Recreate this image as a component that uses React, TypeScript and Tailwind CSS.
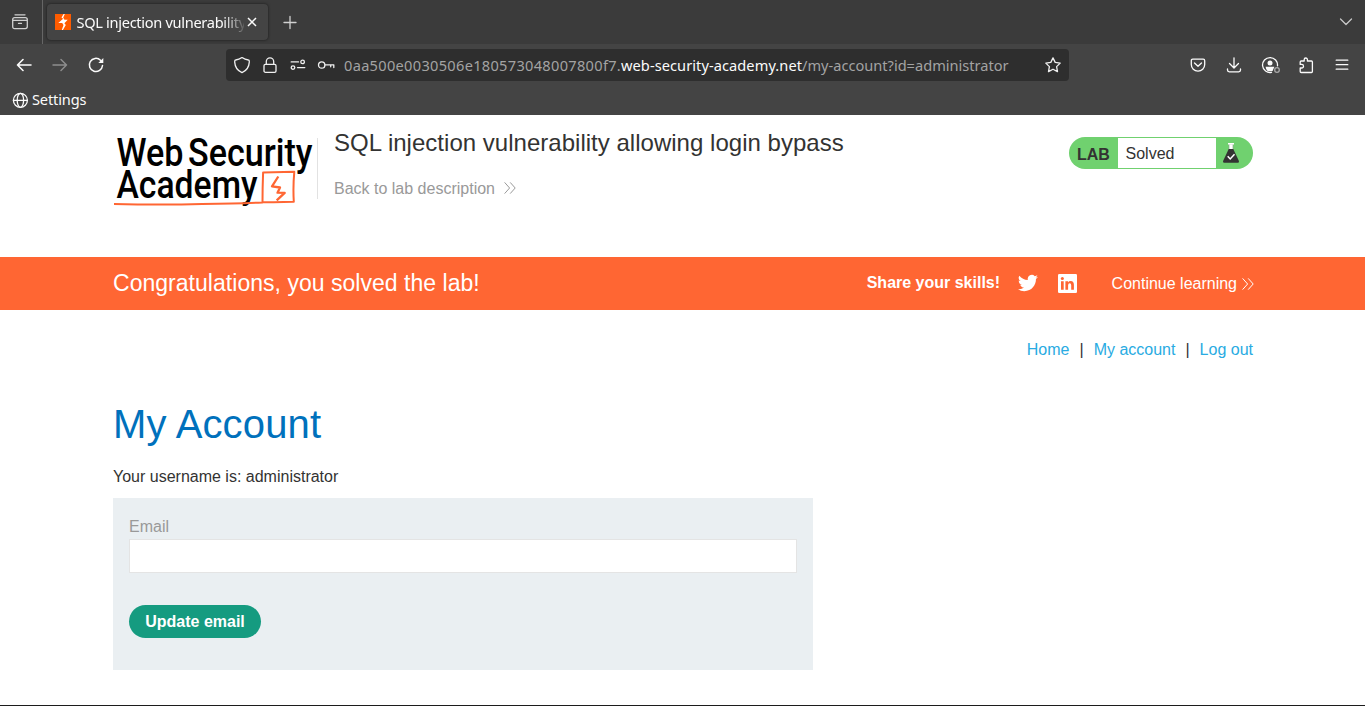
import type { ReactNode } from "react";

type IconProps = { children: ReactNode; className?: string };

function Icon({ children, className = "" }: IconProps) {
  return (
    <svg
      viewBox="0 0 16 16"
      className={`size-4 shrink-0 overflow-visible ${className}`}
      fill="none"
      stroke="currentColor"
      strokeWidth="1.3"
      strokeLinecap="round"
      strokeLinejoin="round"
      aria-hidden="true"
    >
      {children}
    </svg>
  );
}

function TabBar() {
  return (
    <div className="flex h-11 bg-[#3b3b3b]">
      <div className="flex w-[43px] items-center border-r border-[#666] pl-3 text-[#d0d0d0]">
        <Icon>
          <path d="M3 .8h10" />
          <path d="M2.7 3.6h10.6q2 0 2 2v7q0 2-2 2H2.7q-2 0-2-2v-7q0-2 2-2zM.8 6.300h14.4M6.500 9.400h3" />
        </Icon>
      </div>
      <div className="ml-1 mt-1 flex h-9 w-[221px] items-center rounded bg-[#444] pl-2 shadow-[0_0_3px_rgba(0,0,0,0.6)]">
        <svg viewBox="0 0 16 16" className="size-4 shrink-0" aria-hidden="true">
          <rect width="16" height="16" fill="#ff5c00" />
          <path d="M8.600 0 6.500 3.400l1.600 1.400-4.800 4.300h3.900L8.500 11 6.800 16h1.100l2.900-5-1.400-1.800 3.300-3.500H9.500L8.200 3.700 9.800 0z" fill="#fff" />
        </svg>
        <span className="ml-[5.5px] w-[167.5px] whitespace-nowrap text-[14.6px] leading-5 tracking-[-0.31px] text-[#fbfbfb] [mask-image:linear-gradient(to_right,#000_146px,transparent_170px)]">
          SQL injection vulnerability
        </span>
        <svg viewBox="0 0 8 8" className="ml-1 size-2 shrink-0 overflow-visible" stroke="#fbfbfb" strokeWidth="1.5" aria-hidden="true">
          <path d="m0 0 8 8M8 0 0 8" />
        </svg>
      </div>
      <div className="ml-[14px] flex items-center text-[#d0d0d0]">
        <Icon><path d="M8 2.5v12M2 8.5h12" /></Icon>
      </div>
      <div className="ml-auto mr-[11px] flex items-center text-[#c8c8c8]">
        <Icon><path d="m2.5 5 5.5 5.5L13.5 5" /></Icon>
      </div>
    </div>
  );
}

function AddressBar() {
  return (
    <div className="ml-[122px] flex h-8 w-[843px] items-center rounded bg-[#2e2e2e] pl-2 text-[#f0f0f0]">
      <Icon><path d="M8 .6q3 2.2 6.4 2.4 1 0 .9 2.1C15 10 12.5 13.7 8 15.6 3.5 13.7 1 10 .7 5.1q0-2.1.9-2.1Q5 2.800 8 .6z" /></Icon>
      <Icon className="ml-3">
        <rect x="2" y="7.300" width="12" height="8" rx="1.400" />
        <path d="M4.300 7.300V4.500a3.700 3.700 0 0 1 7.400 0v2.800" />
      </Icon>
      <Icon className="ml-3">
        <path d="M1.200 4.900h7.300M7.500 10.600h7.300" />
        <circle cx="12.600" cy="4.900" r="1.800" />
        <circle cx="3" cy="10.600" r="1.800" />
      </Icon>
      <Icon className="ml-3">
        <circle cx="3.700" cy="8" r="3.200" />
        <path d="M6.900 7.800h8.900v2.700M12.700 7.800v2" />
      </Icon>
      <div className="ml-[10px] flex w-[701px] whitespace-nowrap text-[14.6px] leading-6 text-[#a3a3a3]">
        <span className="w-[277px] tracking-[0.3px]">0aa500e0030506e180573048007800f7.</span>
        <span className="w-[181px] tracking-[0.07px] text-[#fbfbfb]">web-security-academy.net</span>
        <span>/my-account?id=administrator</span>
      </div>
      <Icon><path d="m8 .9 2.200 4.500 5 .7-3.600 3.500.9 5L8 12.200l-4.500 2.400.9-5L.8 6.100l5-.7z" /></Icon>
    </div>
  );
}

function NavBar() {
  return (
    <div className="flex h-[42px] items-center pl-4 text-[#fbfbfb]">
      <Icon><path strokeWidth="1.600" d="M15 8H1.500M7 2.500 1.500 8 7 13.500" /></Icon>
      <Icon className="ml-5 text-[#8d8d8d]"><path strokeWidth="1.500" d="M1 8h13.500M9 2.500 14.500 8 9 13.500" /></Icon>
      <Icon className="ml-5">
        <path strokeWidth="1.500" d="M14.500 8.500A6.600 6.600 0 1 1 12.500 3.200" />
        <path d="M15.300 1v5H10.300z" fill="currentColor" stroke="none" />
      </Icon>
      <AddressBar />
      <div className="ml-[121px] flex items-center gap-5">
        <Icon>
          <path d="M2.800 2.200h10.400q1.500 0 1.500 1.500v3.800a6.700 6.700 0 0 1-13.400 0V3.700q0-1.500 1.500-1.500z" />
          <path d="M4.500 6 8 9.300 11.500 6" />
        </Icon>
        <Icon>
          <path d="M8 .8v10M3.500 6.500 8 11l4.500-4.500M1.500 12v1q0 1.800 1.800 1.800h9.400q1.800 0 1.800-1.800v-1" />
        </Icon>
        <Icon>
          <path d="M9.500 15.400A7.500 7.500 0 1 1 15.500 8.800" />
          <circle cx="8" cy="6" r="2.500" fill="currentColor" stroke="none" />
          <path d="M3.600 9.700h8.800l-1 2.300-.8 1.900q-2.600.8-5 0-2-1.700-2-4.200z" fill="currentColor" stroke="none" />
          <circle cx="15" cy="13" r="2.300" stroke="#aaa" />
        </Icon>
        <Icon>
          <path d="M2.200 5q0-1 1-1h3V2.600a1.600 1.600 0 0 1 3.200 0V4h4q1 0 1 1v9.500q0 1-1 1H3.200q-1 0-1-1V11h1.500a1.800 1.800 0 0 0 0-3.600H2.200z" />
        </Icon>
        <Icon><path d="M2.200 3.200h11.600M2.200 7.700h11.600M2.200 12.200h11.600" /></Icon>
      </div>
    </div>
  );
}

function Bookmarks() {
  return (
    <div className="flex h-7 items-center pl-3 text-[#fbfbfb]">
      <Icon>
        <circle cx="8.400" cy="8.300" r="7" />
        <ellipse cx="8.400" cy="8.300" rx="3.200" ry="7" />
        <path d="M1.400 8.300h14" />
      </Icon>
      <span className="-mt-0.5 ml-1 text-[14.6px] leading-5 tracking-[-0.15px]">Settings</span>
    </div>
  );
}

function AcademyLogo() {
  return (
    <svg viewBox="0 0 200 74" className="h-[74px] w-[200px] shrink-0 overflow-visible" role="img" aria-label="Web Security Academy">
      <g fill="#000" fontFamily="Roboto, sans-serif" fontWeight="500" fontSize="38">
        <text x="3.500" y="30.800" textLength="67" lengthAdjust="spacingAndGlyphs">Web</text>
        <text x="75" y="30.800" textLength="124.500" lengthAdjust="spacingAndGlyphs">Security</text>
        <text x="3.500" y="63.300" textLength="141" lengthAdjust="spacingAndGlyphs">Academy</text>
      </g>
      <g fill="none" stroke="#ff6633" strokeLinejoin="round">
        <path strokeWidth="2" d="M1 69q48 1.200 88 0 38-.5 60.500-1.500 0-14.500.6-29.900l31.200-.8q-1.400 15-.5 30-15 .6-30.500.300" />
        <path strokeWidth="2.300" d="m165.300 41.500-6.300 9.800 8 1.200-2.500 5.200 7.200.2-8 7.500" />
      </g>
    </svg>
  );
}

function Chevrons({ className = "" }: { className?: string }) {
  return (
    <svg viewBox="0 0 12 12" className={`size-3 shrink-0 ${className}`} fill="none" stroke="currentColor" strokeWidth="1" aria-hidden="true">
      <path d="m.6.4 5 5.600-5 5.600M6.200.4l5 5.600-5 5.600" />
    </svg>
  );
}

function LabHeader() {
  return (
    <header className="flex h-[142px] items-start pl-[113px] pr-28 pt-5">
      <AcademyLogo />
      <div className="ml-1 mt-[3px] h-[61px] w-px bg-[#e2e2e2]" />
      <div className="ml-4">
        <h1 className="-mt-2 text-2xl leading-8 tracking-[0.02px] text-[#333332]">SQL injection vulnerability allowing login bypass</h1>
        <a href="#" className="mt-[17px] flex h-6 items-center pt-px text-base text-[#999]">
          Back to lab description
          <Chevrons className="-mt-px ml-[9px]" />
        </a>
      </div>
      <div className="ml-auto mt-0.5 flex h-8 w-[184px] rounded-full bg-[#70d16f] py-px text-[#333332]">
        <span className="w-[49px] pl-2 text-base font-bold leading-[33px]">LAB</span>
        <span className="h-[30px] w-[98px] bg-white pl-[7.5px] text-base leading-[31px]">Solved</span>
        <svg viewBox="0 0 16 20" className="ml-[7px] mt-[5px] h-5 w-4" aria-hidden="true">
          <path d="M6 1h4v6H6z" fill="#fff" stroke="#8aa58a" strokeWidth=".7" />
          <path d="M5 0h6v1.500H5z" fill="#fff" />
          <path d="M5.700 6h4.600l5.500 11.700q.6 2-1 2H1.200q-1.600 0-1-2z" fill="#333332" />
          <path d="m4.700 13.300 2.500 2.600 4.300-4.600" fill="none" stroke="#fff" strokeWidth="1.500" />
        </svg>
      </div>
    </header>
  );
}

function SolvedBanner() {
  return (
    <section className="flex h-[53px] items-center bg-[#ff6633] pl-[113px] pr-28 text-base text-white">
      <p className="pb-0.5 text-[23px] leading-8 tracking-[0.03px]">Congratulations, you solved the lab!</p>
      <strong className="ml-auto pb-0.5">Share your skills!</strong>
      <svg viewBox="0 0 24 24" className="-mt-0.5 ml-[18px] size-5" fill="#fff" aria-label="Twitter">
        <path d="M23.950 4.570a10 10 0 0 1-2.820.770 4.960 4.960 0 0 0 2.160-2.720c-.950.550-2 .950-3.130 1.180a4.920 4.920 0 0 0-8.380 4.480C7.690 8.090 4.070 6.130 1.640 3.160a4.920 4.920 0 0 0 1.520 6.570 4.900 4.900 0 0 1-2.230-.610v.060a4.920 4.920 0 0 0 3.950 4.830 5 5 0 0 1-2.210.080 4.940 4.940 0 0 0 4.600 3.420A9.870 9.870 0 0 1 0 19.540a14 14 0 0 0 7.550 2.210c9.050 0 14-7.500 14-13.980 0-.210 0-.420-.020-.630a9.940 9.940 0 0 0 2.420-2.570z" />
      </svg>
      <svg viewBox="0 0 19 19" className="ml-5 size-[19px]" aria-label="LinkedIn">
        <rect width="19" height="19" rx="1.200" fill="#fff" />
        <path d="M3 7.200h2.700v8.600H3zM7.400 7.200H10v1.200q.8-1.400 2.700-1.400 3.200 0 3.200 3.800v5h-2.700v-4.600q0-1.900-1.500-1.900-1.600 0-1.600 1.900v4.600H7.400z" fill="#ff6633" />
        <circle cx="4.350" cy="4.500" r="1.550" fill="#ff6633" />
      </svg>
      <a href="#" className="ml-[34.5px] flex items-center">
        Continue learning
        <Chevrons className="-mr-px ml-[5px]" />
      </a>
    </section>
  );
}

function AccountPage() {
  return (
    <main className="h-[396px] border-b border-[#1c1c1c] pl-[113px] pr-28 pt-7 text-base">
      <nav className="flex h-6 items-center justify-end gap-[10px] text-[#29abe2]">
        <a href="#">Home</a>
        <span className="text-[#333332]">|</span>
        <a href="#">My account</a>
        <span className="text-[#333332]">|</span>
        <a href="#">Log out</a>
      </nav>
      <h2 className="mt-[38px] text-[40px] leading-[48px] tracking-[0.14px] text-[#0071bc]">My Account</h2>
      <p className="mt-[17px] leading-6 text-[#333332]">Your username is: administrator</p>
      <form className="mt-[9px] flex h-[172px] w-[700px] flex-col items-start bg-[#eaeff2] px-4 pt-[17px]" onSubmit={(event) => event.preventDefault()}>
        <label htmlFor="email" className="leading-6 text-[#999]">Email</label>
        <input id="email" type="email" className="h-[34px] w-full border border-[#e4e4e4] bg-white px-2" />
        <button className="mt-8 h-[33px] w-[132px] rounded-full bg-[#159b80] font-bold text-white">Update email</button>
      </form>
    </main>
  );
}

export default function App() {
  return (
    <div className="h-[706px] w-[1365px] overflow-hidden bg-white font-['Liberation_Sans',Arial,sans-serif]">
      <div className="h-[115px] bg-[#444] font-['Noto_Sans',sans-serif]">
        <TabBar />
        <NavBar />
        <Bookmarks />
      </div>
      <LabHeader />
      <SolvedBanner />
      <AccountPage />
    </div>
  );
}
